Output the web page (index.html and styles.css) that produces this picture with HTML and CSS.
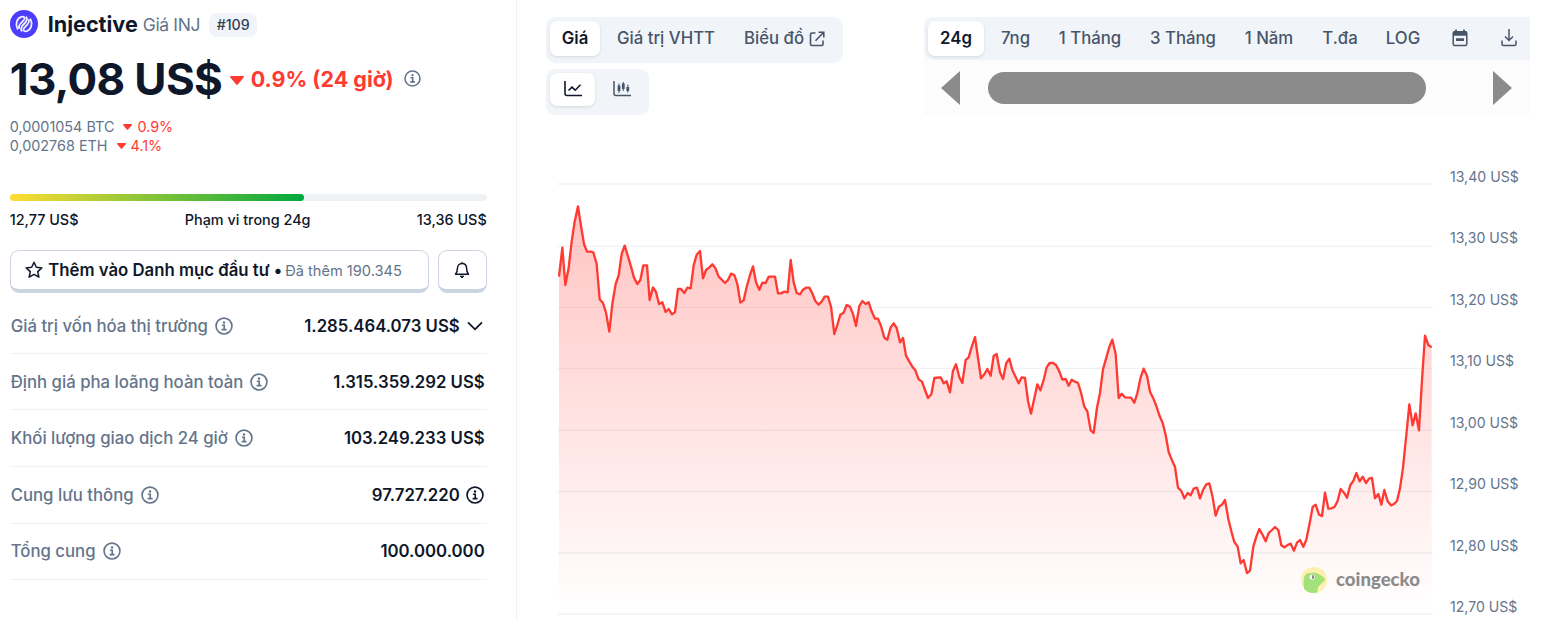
FILE: index.html
```html
<!DOCTYPE html>
<html lang="vi">
<head>
<meta charset="utf-8">
<title>Injective Giá INJ</title>
<link rel="stylesheet" href="styles.css">
</head>
<body>
<svg class="defs" width="0" height="0">
  <symbol id="info" viewBox="0 0 24 24"><g fill="none" stroke="currentColor"><circle cx="12" cy="12" r="10.6" stroke-width="2.2"/><path d="M9.2 11h3.1v5.6M8.800 16.800h6.600" stroke-width="2.200"/></g><circle cx="12" cy="7.400" r="1.600" fill="currentColor"/></symbol>
  <symbol id="caret" viewBox="0 0 14 9"><path d="M1 0h12c1 0 1.200 1 .6 1.600L8 8.300c-.6.7-1.400.7-2 0L.4 1.600C-.2 1 0 0 1 0z" fill="currentColor"/></symbol>
</svg>
<div class="page">
  <section class="summary">
    <header class="coin">
      <svg class="coin-logo" viewBox="0 0 28 28"><circle cx="14" cy="14" r="14" fill="#4c3dfa"/><g fill="none" stroke="#eeecff" stroke-width="1.800" stroke-linecap="round"><path id="strand" d="M7.500 18.800C4.800 13.500 7.300 8.200 11.300 6.900c3-.8 4.400 1.100 2.400 3.300l-3.200 3.300c-1.500 1.700-1.900 3-1.400 4.500"/><use href="#strand" transform="rotate(180 14 14)"/><path d="M11.600 20.700c-1.500-2.600 0-4.500 2.400-6.700s3.900-4.100 2.400-6.700" stroke-width="2"/></g></svg>
      <h1 class="coin-name">Injective</h1><span class="coin-sub">Giá INJ</span><span class="rank">#109</span>
    </header>
    <div class="price-row">
      <span class="price">13,08 US$</span>
      <svg class="caret-lg red"><use href="#caret"/></svg>
      <span class="change red">0.9% (24 giờ)</span>
      <svg class="info gray"><use href="#info"/></svg>
    </div>
    <div class="pair">0,0001054 BTC<svg class="caret-sm red"><use href="#caret"/></svg><span class="red">0.9%</span></div>
    <div class="pair pair-eth">0,002768 ETH<svg class="caret-sm red"><use href="#caret"/></svg><span class="red">4.1%</span></div>
    <div class="range"><div class="range-fill"></div></div>
    <div class="range-labels"><span>12,77 US$</span><span>Phạm vi trong 24g</span><span>13,36 US$</span></div>
    <div class="actions">
      <div class="btn btn-add">
        <svg class="star" viewBox="0 0 18 18"><path d="M9 1.300l2.300 5 5.600.6-4.200 3.700 1.200 5.600L9 13.400l-4.900 2.800 1.200-5.600L1.100 6.900l5.600-.6z" fill="none" stroke="currentColor" stroke-width="1.500" stroke-linejoin="round"/></svg>
        <span class="btn-text">Thêm vào Danh mục đầu tư •</span><span class="btn-sub">Đã thêm 190.345</span>
      </div>
      <div class="btn btn-bell"><svg viewBox="0 0 18 18" width="18" height="18"><path d="M2.500 13.200c1.300-1.300 1.900-2.600 1.900-5.600C4.400 4.600 6.200 2.400 9 2.400s4.600 2.200 4.600 5.200c0 3 .6 4.300 1.900 5.600z" fill="none" stroke="currentColor" stroke-width="1.500" stroke-linejoin="round"/><path d="M9 .8v1.500M7.200 15.200h3.600L9 17z" fill="currentColor" stroke="currentColor" stroke-width="1"/></svg></div>
    </div>
    <div class="stats">
      <div class="stat"><span>Giá trị vốn hóa thị trường</span><svg class="info"><use href="#info"/></svg><b>1.285.464.073 US$</b><svg class="chevron" viewBox="0 0 16 10"><path d="M1 1.300l7 7 7-7" fill="none" stroke="currentColor" stroke-width="1.800"/></svg></div>
      <div class="stat"><span>Định giá pha loãng hoàn toàn</span><svg class="info"><use href="#info"/></svg><b>1.315.359.292 US$</b></div>
      <div class="stat raised"><span>Khối lượng giao dịch 24 giờ</span><svg class="info"><use href="#info"/></svg><b>103.249.233 US$</b></div>
      <div class="stat raised"><span>Cung lưu thông</span><svg class="info"><use href="#info"/></svg><b>97.727.220</b><svg class="info dark"><use href="#info"/></svg></div>
      <div class="stat raised"><span>Tổng cung</span><svg class="info"><use href="#info"/></svg><b>100.000.000</b></div>
    </div>
  </section>
  <main class="panel">
    <div class="toolbar">
      <div class="left-tools">
        <div class="group views"><span class="tab active">Giá</span><span class="tab">Giá trị VHTT</span><span class="tab">Biểu đồ <svg class="ext" viewBox="0 0 16 16"><path d="M6.500 2H3a1.500 1.500 0 0 0-1.500 1.500V13A1.500 1.500 0 0 0 3 14.500h9.500A1.500 1.500 0 0 0 14 13V9.500M9.500 1.200h5.300v5.300M14.500 1.500L6.500 9.700" fill="none" stroke="currentColor" stroke-width="1.600"/></svg></span></div>
        <div class="group kinds"><span class="tab active"><svg viewBox="0 0 18 16" width="18" height="16"><path d="M1 0v12.500q0 2 2 2h15M4.500 9.500L8 6.200l3.200 3L16.500 3.800" fill="none" stroke="currentColor" stroke-width="1.600"/></svg></span><span class="tab"><svg viewBox="0 0 18 16" width="18" height="16"><path d="M1 0v12.500q0 2 2 2h15" fill="none" stroke="currentColor" stroke-width="1.500"/><path d="M6 2.500v9.500M10.300 1v9M14.800 3.500v8" stroke="currentColor"/><path d="M4.600 4.500h2.800v5.500H4.600zM8.900 2.500h2.800V8H8.900zM13.400 6h2.800v4h-2.800z" fill="currentColor"/></svg></span></div>
      </div>
      <div class="periods">
        <div class="period-tabs">
          <span class="tab active">24g</span><span class="tab">7ng</span><span class="tab">1 Tháng</span><span class="tab">3 Tháng</span><span class="tab">1 Năm</span><span class="tab">T.đa</span><span class="tab">LOG</span>
          <span class="tab"><svg viewBox="0 0 16 18" width="16" height="18"><path d="M4 .5v3M12 .5v3" stroke="currentColor" stroke-width="1.800"/><rect x="1.200" y="2.800" width="13.600" height="13.700" rx="1.500" fill="none" stroke="currentColor" stroke-width="1.500"/><path d="M1 2.500h14v4.200H1zM4 9.200h8v2.800H4z" fill="currentColor"/></svg></span>
          <span class="tab"><svg viewBox="0 0 16 18" width="16" height="18"><path d="M8 0v11.200M4 7.500l4 4 4-4M1 11.500V15q0 1.500 1.500 1.500h11q1.500 0 1.500-1.500v-3.500" fill="none" stroke="currentColor" stroke-width="1.500"/></svg></span>
        </div>
        <div class="scroller"><span class="arrow-left"></span><span class="thumb"></span><span class="arrow-right"></span></div>
      </div>
    </div>
    <div class="chart">
      <svg class="plot" viewBox="0 0 2700 1353">
        <defs><linearGradient id="fade" gradientUnits="userSpaceOnUse" x1="0" y1="109" x2="0" y2="1332"><stop offset="0" stop-color="#ff3a33" stop-opacity=".3"/><stop offset="1" stop-color="#ff3a33" stop-opacity="0"/></linearGradient></defs>
        <g id="grid" stroke="#eff2f5" stroke-width="4"></g>
        <path id="area" fill="url(#fade)"/>
        <path id="line" fill="none" stroke="#ff3a33" stroke-width="7" stroke-linejoin="round"/>
      </svg>
      <div class="axis"><span>13,40 US$</span><span>13,30 US$</span><span>13,20 US$</span><span>13,10 US$</span><span>13,00 US$</span><span>12,90 US$</span><span>12,80 US$</span><span>12,70 US$</span></div>
      <div class="watermark"><svg viewBox="0 0 26 26" width="26" height="26"><circle cx="13" cy="13" r="13" fill="#fff0ad"/><path d="M3.200 22C2 17 2.600 12 3.300 9.500 4.500 6.500 7 5.700 10 6c2.500-.3 5-.5 7.500 1 2.300 1.200 4.500 2.300 6 4.200 1.200 1.700-.5 3.500-3 5.300-2.800 2-4.500 4.500-4 9C11 26.800 6 25.500 3.200 22z" fill="#a3e27b"/><circle cx="11.200" cy="10" r="2.600" fill="#fff"/><path d="M11.200 8a2 2 0 0 1 0 4z" fill="#777"/></svg><span>coingecko</span></div>
    </div>
  </main>
</div>
<script src="chart.js"></script>
</body>
</html>
```
FILE: styles.css
```css
* { box-sizing: border-box; }
body { margin: 0; background: #fff; color: #0f172a; font-family: Inter, "Noto Sans", sans-serif; overflow: hidden; }
svg { flex: none; display: block; }
.defs { position: absolute; }
.page { display: grid; grid-template-columns: 517px 1fr; height: 621px; }
.red { color: #ff3a33; }
.gray { color: #64748b; }
.summary { border-right: 1px solid #eff2f5; padding: 9px 29.300px 0 9.700px; white-space: nowrap; }
.coin { display: flex; align-items: center; height: 30px; }
.coin-logo { width: 28px; height: 28px; margin-right: 10px; }
.coin-name { margin: 0; font-size: 21.600px; line-height: 28px; font-weight: 700; width: 95px; }
.coin-sub { font-size: 17.500px; letter-spacing: -.35px; color: #64748b; width: 66.500px; }
.rank { width: 48px; height: 24px; line-height: 24px; margin-top: 2px; border-radius: 8px; background: #f1f5f9; color: #334155; font-size: 14.200px; font-weight: 500; text-align: center; }
.price-row { display: flex; align-items: center; height: 60px; margin-top: 10px; }
.price { font-size: 44px; font-weight: 700; letter-spacing: -.65px; width: 220px; }
.caret-lg { width: 14px; height: 9px; margin: 2px 7px 0 0; }
.change { font-size: 21.500px; font-weight: 700; width: 153px; }
.info { width: 18px; height: 18px; }
.price-row .info { width: 17px; height: 17px; margin-bottom: 1px; }
.pair { display: flex; align-items: center; height: 19px; margin-top: 8px; font-size: 14.400px; color: #64748b; }
.pair-eth { margin-top: 0; }
.caret-sm { width: 9px; height: 6px; margin: 1px 5px 0 9px; }
.range { height: 7px; margin-top: 39px; border-radius: 4px; background: #eff2f5; }
.range-fill { width: 294.500px; height: 7px; border-radius: 4px; background: linear-gradient(90deg, #fd3, #00a83e); }
.range-labels { display: flex; justify-content: space-between; margin-top: 9px; height: 20px; line-height: 20px; font-size: 14.400px; font-weight: 500; }
.actions { display: flex; gap: 9px; margin-top: 20px; }
.btn { display: flex; align-items: center; height: 43px; border: 1px solid #cbd5e1; border-bottom-width: 4.500px; border-radius: 9px; }
.btn-add { width: 419px; padding-left: 14px; }
.btn-bell { width: 49px; justify-content: center; }
.star { width: 18px; height: 18px; margin-right: 5.500px; }
.btn-text { font-size: 16.750px; font-weight: 600; width: 237px; }
.btn-sub { font-size: 14.600px; color: #64748b; padding-top: 1px; }
.stats { display: grid; grid-template-rows: 57px 56px 57px 57px 56px; margin-top: 4px; }
.stat { display: flex; align-items: center; border-bottom: 1px solid #eff2f5; font-size: 16.750px; color: #64748b; padding: 1px 2px 0 1px; }
.raised { padding-top: 0; padding-bottom: 1px; }
.stat span { margin-right: 7px; font-weight: 500; }
.stat b { margin-left: auto; font-weight: 600; color: #0f172a; }
.chevron { width: 16px; height: 10px; margin: 0 2px 0 7px; color: #0f172a; }
.stat .dark { color: #0f172a; margin: 0 1px 0 6px; }
.panel { padding: 17px 31px 0 29px; }
.toolbar { display: flex; justify-content: space-between; height: 98px; }
.left-tools { display: grid; grid-template-rows: 46px 46px; gap: 6px; justify-items: start; }
.group { display: grid; border-radius: 9px; background: #f1f5f9; padding: 4px 3px 0 4px; }
.views { width: 297px; grid-template-columns: 50px 132px 105px; }
.kinds { width: 103px; grid-template-columns: 45px 54px; }
.tab { display: flex; align-items: center; justify-content: center; height: 35px; padding-bottom: 2px; font-size: 16.750px; font-weight: 500; color: #475569; white-space: nowrap; }
.kinds .tab { height: 33px; }
.active { background: #fff; color: #0f172a; font-weight: 600; border-radius: 7px; box-shadow: 0 1px 3px rgba(15,23,42,.13); }
.ext { width: 16px; height: 16px; margin: 2px 0 0 5px; }
.periods { width: 606px; background: #fcfcfc; }
.period-tabs { display: grid; grid-template-columns: 56px 63px 86px 100px 72px 70px 56px 57px 42px; height: 43px; padding: 4px 0 0 4px; border-radius: 9px 0 0 9px; background: #f1f5f9; }
.scroller { display: flex; align-items: center; height: 55px; padding-left: 17px; }
.arrow-left { border: solid transparent; border-width: 17px 19px 17px 0; border-right-color: #8b8b8b; }
.thumb { width: 438px; height: 32px; margin: 0 67px 0 28px; border-radius: 16px; background: #8b8b8b; }
.arrow-right { border: solid transparent; border-width: 17px 0 17px 19px; border-left-color: #8b8b8b; }
.chart { position: relative; display: flex; margin: 55px -31px 0 4px; height: 451px; }
.plot { width: 900px; height: 451px; }
.axis { display: flex; flex-direction: column; justify-content: space-between; height: 450px; margin-top: -3px; font-size: 14.100px; line-height: 20px; color: #64748b; white-space: nowrap; }
.watermark { position: absolute; left: 751px; top: 397px; display: flex; align-items: center; gap: 9px; font: 900 18.600px/24px Lato, sans-serif; color: #8b8b8b; }
.watermark span { padding-bottom: 2px; }
```
FILE: chart.js
```javascript
// Each run of price points is stored relative to its own origin.
const runs = [
  { at: [0, 0], points: "27,320 37,233 46,345 56,293 65,215 74,155 84,109 93,168 102,222 111,245 121,245 130,247 140,282 149,388 159,399 168,428 178,485 187,402 197,342 206,316 215,252 224,227 233,256 243,290 252,323 262,342 271,330 280,286 291,286 299,390 309,352 318,366 327,402 337,397 347,426 356,417 366,433 375,426 384,357 393,357 403,369 412,353 422,355 431,286 440,254 450,243 459,325 468,300 478,292 487,283 496,294 506,320 525,339 534,330 543,311 553,315 562,342 571,398 581,391 590,351 600,315 609,289 618,337 628,359 637,338 647,339 656,320 675,320 684,370 693,370 703,365 713,367 722,270 731,337 740,369 750,373 759,359 768,353 778,353 787,370 796,393 806,404 815,395 824,380 834,380 843,410 853,492 862,465 871,434" },
  { at: [870, 300], points: "11,128 20,105 30,110 39,132 48,168 58,108 67,93 77,102 86,97 95,124 105,146 114,146 123,168 133,203 142,209 152,172 161,160 170,174 180,217 189,204 198,257 208,275 217,290 226,301 236,328 246,335 255,360 264,384 274,373 283,324 302,322 311,340 320,334 330,367 339,302 348,283 358,322 367,339 377,270 386,262 395,231 405,201 414,264 423,325 433,313 442,297 452,317 461,258 470,252 480,307 489,327 499,279 508,266 517,300 536,340 545,322 555,324 564,393 573,431 583,385 592,343 601,361 611,330 620,292 629,279 639,279 648,285 658,304 667,329 677,327 686,347 695,329 705,335 714,339 723,368 733,410 742,424 752,481 761,489 771,413 780,369 789,298 799,263 808,231 817,209 827,252 836,384 845,371 855,382 873,383 883,398" },
  { at: [1590, 450], points: "172,220 182,172 191,146 201,167 210,215 219,233 229,258 238,286 248,309 257,345 266,396 276,421 285,441 294,503 304,513 313,535 323,519 332,526 341,506 351,503 360,535 370,508 379,493 388,490 398,532 407,587 416,561 426,554 435,540 445,597 454,634 463,666 473,680 482,730 491,720 501,759 510,752 520,680 529,650 538,627 548,645 557,664 566,639 576,630 585,621 595,630 604,676 613,682 623,675 632,671 642,692 651,668 660,660 670,680 679,659" },
  { at: [2070, 450], points: "209,610 218,561 227,554 237,584 246,588 255,518 265,566 275,565 284,560 293,542 302,507 312,518 321,533 331,495 340,483 349,459 359,484 368,470 378,489 387,476 396,474 405,535 415,522 424,554 433,510 443,544 453,556 462,552 471,543 480,505 489,443 499,345 508,253 518,316 527,280 537,331 546,180 555,47 565,75 575,82" }
];
const points = runs.flatMap(run => run.points.split(" ").map(pair => {
  const [x, y] = pair.split(",").map(Number);
  return [x + run.at[0], y + run.at[1]];
}));
const line = "M" + points.map(p => p.join(" ")).join("L");
document.getElementById("line").setAttribute("d", line);
document.getElementById("area").setAttribute("d", `${line}V1332H${points[0][0]}Z`);
document.getElementById("grid").innerHTML = [42, 229, 412, 595, 781, 965, 1149, 1332]
  .map(y => `<path d="M23 ${y}H2648"/>`).join("");
```
